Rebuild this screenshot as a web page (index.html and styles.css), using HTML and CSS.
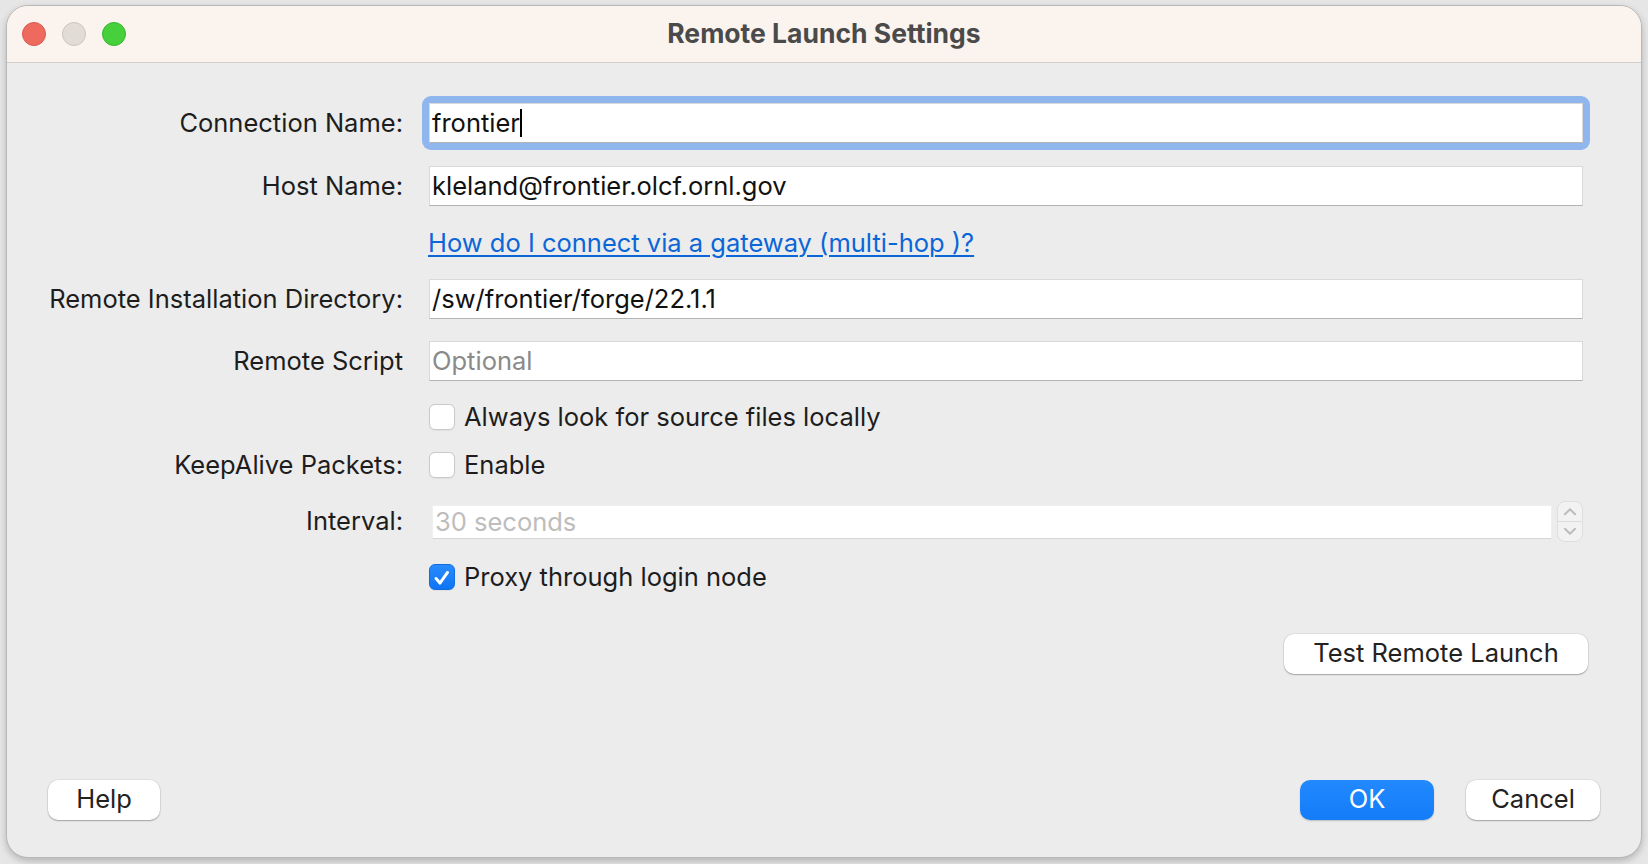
FILE: index.html
```html
<!DOCTYPE html>
<html lang="en">
<head>
<meta charset="utf-8">
<title>Remote Launch Settings</title>
<link rel="stylesheet" href="styles.css">
</head>
<body>
<div class="window">
  <div class="titlebar">
    <div class="lights">
      <span class="light red"></span>
      <span class="light gray"></span>
      <span class="light green"></span>
    </div>
    <div class="title">Remote Launch Settings</div>
    <div></div>
  </div>
  <div class="form">
    <div class="row r-conn">
      <div class="label">Connection Name:</div>
      <div class="focus"><div class="field">frontier<span class="caret"></span></div></div>
    </div>
    <div class="row r-host">
      <div class="label">Host Name:</div>
      <div class="field">kleland@frontier.olcf.ornl.gov</div>
    </div>
    <div class="row r-link">
      <div class="label"></div>
      <a class="link" href="#">How do I connect via a gateway (multi-hop )?</a>
    </div>
    <div class="row r-dir">
      <div class="label">Remote Installation Directory:</div>
      <div class="field">/sw/frontier/forge/22.1.1</div>
    </div>
    <div class="row r-script">
      <div class="label">Remote Script</div>
      <div class="field placeholder">Optional</div>
    </div>
    <div class="row r-always">
      <div class="label"></div>
      <span class="check"></span><span class="check-text">Always look for source files locally</span>
    </div>
    <div class="row r-keep">
      <div class="label">KeepAlive Packets:</div>
      <span class="check"></span><span class="check-text">Enable</span>
    </div>
    <div class="row r-interval">
      <div class="label">Interval:</div>
      <div class="field disabled">30 seconds</div>
      <div class="spinner">
        <svg class="sp-up" width="26" height="20" viewBox="0 0 26 20"><path d="M7.5 13 L13 7.5 L18.5 13" fill="none" stroke="#bdbdbd" stroke-width="2.2" stroke-linecap="round" stroke-linejoin="round"/></svg>
        <svg class="sp-down" width="26" height="20" viewBox="0 0 26 20"><path d="M7.5 7 L13 12.5 L18.5 7" fill="none" stroke="#bdbdbd" stroke-width="2.2" stroke-linecap="round" stroke-linejoin="round"/></svg>
      </div>
    </div>
    <div class="row r-proxy">
      <div class="label"></div>
      <span class="check checked"><svg width="26" height="26" viewBox="0 0 26 26"><path d="M6.5 13.5 L10.8 18.5 L19 7" fill="none" stroke="#fff" stroke-width="3.2" stroke-linecap="round" stroke-linejoin="round"/></svg></span><span class="check-text">Proxy through login node</span>
    </div>
    <div class="row r-test">
      <button class="btn btn-test">Test Remote Launch</button>
    </div>
  </div>
  <div class="footer">
    <button class="btn btn-help">Help</button>
    <div class="spacer"></div>
    <button class="btn btn-ok">OK</button>
    <button class="btn btn-cancel">Cancel</button>
  </div>
</div>
</body>
</html>
```
FILE: styles.css
```css
html, body {
  margin: 0;
  height: 864px;
  overflow: hidden;
}
body {
  box-sizing: border-box;
  padding: 5px 6px 0 6px;
  background: #e6e6e6;
  font-family: Inter, "Liberation Sans", sans-serif;
  color: #1d1d1d;
}
.window {
  height: 853px;
  box-sizing: border-box;
  border: 1px solid #b8b8b8;
  border-radius: 22px;
  background: #ececec;
  overflow: hidden;
  display: flex;
  flex-direction: column;
  box-shadow: 0 3px 7px rgba(0,0,0,0.22);
}
.titlebar {
  height: 56px;
  flex: 0 0 auto;
  background: #faf3ee;
  border-bottom: 1px solid #d2cecb;
  display: grid;
  grid-template-columns: 1fr auto 1fr;
  align-items: center;
}
.lights {
  display: flex;
  gap: 16px;
  padding-left: 15px;
}
.light {
  width: 24px;
  height: 24px;
  border-radius: 50%;
  box-sizing: border-box;
}
.red { background: #ee6a5f; border: 1px solid #d85a4f; }
.gray { background: #e2dcd7; border: 1px solid #cbc4be; }
.green { background: #46d03c; border: 1px solid #38b52e; }
.title {
  font-weight: 700;
  font-size: 26.5px;
  color: #4a4a4a;
  padding-bottom: 3px;
}
.form {
  flex: 1;
  display: flex;
  flex-direction: column;
  padding: 40px 58px 0 0;
}
.row {
  display: flex;
  align-items: center;
}
.label {
  flex: 0 0 396px;
  margin-right: 26px;
  text-align: right;
  font-size: 25.5px;
  color: #1d1d1d;
  padding-bottom: 2px;
}
.field {
  flex: 1;
  height: 40px;
  box-sizing: border-box;
  background: #fff;
  border: 1px solid #d9d9d9;
  border-bottom-color: #b3b3b3;
  font-size: 25.5px;
  color: #111;
  padding: 0 2px 1px;
  display: flex;
  align-items: center;
  white-space: nowrap;
}
.focus {
  flex: 1;
  display: flex;
  padding: 7px;
  margin: -7px;
  background: #90b7ed;
  border-radius: 9px;
}
.caret {
  display: inline-block;
  width: 2px;
  height: 28px;
  background: #000;
  margin-left: 0;
}
.placeholder { color: #8a8a8a; }
.r-conn { height: 40px; }
.r-host { margin-top: 23px; }
.r-link { margin-top: 22px; height: 30px; }
.r-dir { margin-top: 21px; }
.r-script { margin-top: 22px; }
.r-always { margin-top: 22px; height: 28px; }
.r-keep { margin-top: 20px; height: 28px; }
.r-interval { margin-top: 22px; height: 41px; }
.r-proxy { margin-top: 21px; height: 28px; }
.r-test { margin-top: 43px; justify-content: flex-end; margin-right: -5px; }
.link {
  font-size: 25.5px;
  color: #0b66d8;
  text-decoration: underline;
  text-underline-offset: 3px;
  text-decoration-thickness: 1.5px;
  margin-left: -1px;
  margin-bottom: 2px;
}
.check {
  width: 26px;
  height: 26px;
  box-sizing: border-box;
  border-radius: 6px;
  background: #fff;
  border: 1px solid #cacaca;
  box-shadow: 0 0.5px 1px rgba(0,0,0,0.06);
  margin-right: 9px;
  display: flex;
}
.check.checked {
  background: linear-gradient(#2a8bff, #0e74f2);
  border-color: #0f6de0;
}
.check-text {
  font-size: 25.5px;
  color: #1d1d1d;
  padding-bottom: 2px;
}
.field.disabled {
  height: 34px;
  color: #bdbdbd;
  border-color: #efefef;
  border-bottom-color: #d6d6d6;
  margin-left: 3px;
}
.spinner {
  width: 26px;
  height: 41px;
  margin-left: 5px;
  box-sizing: border-box;
  border-radius: 8px;
  background: #f2f2f2;
  border: 1px solid #dedede;
  display: flex;
  flex-direction: column;
  overflow: hidden;
}
.spinner svg {
  display: block;
  width: 24px;
  height: 19.5px;
}
.sp-up { border-bottom: 1px solid #dcdcdc; }
.btn {
  height: 40px;
  box-sizing: border-box;
  border: none;
  border-radius: 10px;
  background: #fff;
  font-family: Inter, "Liberation Sans", sans-serif;
  font-size: 25.5px;
  color: #222;
  box-shadow: 0 1px 1.5px rgba(0,0,0,0.28), 0 0 0 0.5px rgba(0,0,0,0.1);
  padding: 0 0 3px;
}
.btn-test { width: 304px; }
.footer {
  display: flex;
  align-items: center;
  padding: 0 41px 37px 41px;
}
.spacer { flex: 1; }
.btn-help { width: 112px; }
.btn-ok {
  width: 134px;
  background: linear-gradient(#2289ff, #137cf7);
  color: #fff;
  margin-right: 32px;
  box-shadow: 0 1px 1.5px rgba(0,0,0,0.2);
}
.btn-cancel { width: 134px; }
```
